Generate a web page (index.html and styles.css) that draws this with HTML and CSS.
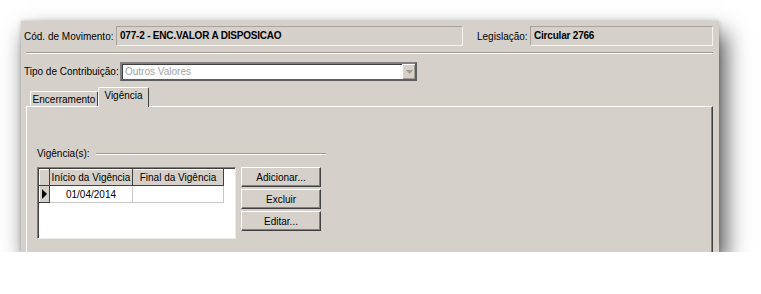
FILE: index.html
```html
<!DOCTYPE html>
<html lang="pt-BR">

<head>
  <meta charset="UTF-8" />
  <title>Movimento - Vigência</title>
  <link rel="stylesheet" href="styles.css">
</head>

<body>
  <div class="form">
    <!-- Cabeçalho do movimento -->
    <div class="row top-row">
      <span class="lbl lbl-mov">Cód. de Movimento:</span>
      <div class="field mov">077-2 - ENC.VALOR A DISPOSICAO</div>
      <span class="lbl leg">Legislação:</span>
      <div class="field lei">Circular 2766</div>
    </div>

    <div class="sep"></div>

    <div class="row contrib-row">
      <span class="lbl lbl-tipo">Tipo de Contribuição:</span>
      <div class="combo">
        <span class="combo-text">Outros Valores</span>
        <span class="drop">
          <svg width="7" height="4" viewBox="0 0 7 4"><path d="M0 0h7L3.5 4z" fill="#a09c94" /></svg>
        </span>
      </div>
    </div>

    <!-- Abas -->
    <div class="tabs">
      <div class="tab">Encerramento</div>
      <div class="tab active">Vigência</div>
    </div>

    <div class="sheet">
      <div class="group-title">
        <span>Vigência(s):</span>
        <i></i>
      </div>

      <div class="grid-area">
        <div class="grid">
          <table>
            <tr>
              <th class="ind"></th>
              <th class="c1">Início da Vigência</th>
              <th class="c2">Final da Vigência</th>
            </tr>
            <tr>
              <td class="ind"><span class="arrow"></span></td>
              <td class="c1">01/04/2014</td>
              <td class="c2"></td>
            </tr>
          </table>
        </div>

        <div class="buttons">
          <button>Adicionar...</button>
          <button>Excluir</button>
          <button>Editar...</button>
        </div>
      </div>
    </div>
  </div>
</body>

</html>
```

FILE: styles.css
```css
/* Página */
body {
  margin: 0;
  background-color: #ffffff;
  font-family: 'Liberation Sans', Arial, sans-serif;
  font-size: 10px;
  color: #000;
}

/* Janela recortada com sombra */
.form {
  margin: 21px 0 0 21px;
  width: 698px;
  height: 231px;
  background-color: #d5d1ca;
  overflow: hidden;
  box-shadow: 6px 12px 22px rgba(0, 0, 0, 0.7), 0 0 4px rgba(0, 0, 0, 0.2);
}

.row {
  display: flex;
  align-items: center;
  padding-left: 3px;
}

.top-row {
  padding-top: 5px;
}

.contrib-row {
  margin-top: 8px;
}

.lbl {
  white-space: nowrap;
}

.lbl-mov {
  width: 92px;
}

.lbl-tipo {
  width: 96px;
}

/* Campos somente leitura */
.field {
  height: 18px;
  line-height: 18px;
  padding-left: 3px;
  font-weight: bold;
  letter-spacing: -0.2px;
  border: 1px solid;
  border-color: #a8a49d #f6f4f0 #f6f4f0 #a8a49d;
}

.mov {
  width: 342px;
}

.leg {
  margin-left: 14px;
  width: 53px;
}

.lei {
  width: 178px;
}

.sep {
  margin: 6px 6px 0 5px;
  height: 0;
  border-top: 1px solid #a09c94;
  border-bottom: 1px solid #ffffff;
}

/* Combo desabilitado */
.combo {
  display: flex;
  width: 293px;
  height: 15px;
  background-color: #fff;
  border: 2px solid;
  border-color: #808080 #5e5e5e #5e5e5e #808080;
  box-shadow: inset 1px 1px 0 #404040;
}

.combo-text {
  flex: 1;
  padding: 1px 0 0 3px;
  line-height: 14px;
  color: #a3a3a3;
}

.drop {
  width: 12px;
  display: flex;
  align-items: center;
  justify-content: center;
  background-color: #d5d1ca;
  border-left: 1px solid #fff;
  border-top: 1px solid #fff;
  box-shadow: inset -1px -1px 0 #a09c94;
}

/* Abas */
.tabs {
  display: flex;
  align-items: flex-end;
  margin: 6px 0 0 9px;
  position: relative;
  z-index: 1;
}

.tab {
  width: 66px;
  height: 14px;
  line-height: 16px;
  text-align: center;
  border: 1px solid;
  border-bottom: none;
  border-color: #ffffff #404040 #ffffff #ffffff;
  border-radius: 2px 2px 0 0;
}

.tab.active {
  width: 49px;
  height: 19px;
  line-height: 15px;
  margin-bottom: -1px;
  background-color: #d5d1ca;
}

.sheet {
  margin-left: 5px;
  width: 675px;
  height: 160px;
  border: 1px solid;
  border-color: #ffffff #404040 #404040 #ffffff;
  box-shadow: inset -1px 0 0 #808080;
  padding: 40px 0 0 10px;
}

.group-title {
  display: flex;
  align-items: center;
  width: 289px;
  line-height: 13px;
}

.group-title i {
  flex: 1;
  margin-left: 6px;
  border-top: 1px solid #a09c94;
  border-bottom: 1px solid #fff;
}

.grid-area {
  display: flex;
  margin-top: 7px;
}

/* Grade */
.grid {
  width: 196px;
  height: 69px;
  background-color: #fff;
  border: 1px solid;
  border-color: #808080 #eeebe6 #eeebe6 #808080;
  box-shadow: inset 1px 1px 0 #404040;
  padding: 1px 0 0 1px;
}

table {
  border-collapse: collapse;
}

th {
  height: 15px;
  padding: 0;
  font-weight: normal;
  white-space: nowrap;
  background-color: #d5d1ca;
  border: 1px solid;
  border-color: #ffffff #404040 #404040 #ffffff;
}

td {
  height: 16px;
  padding: 0;
  text-align: center;
  border-right: 1px solid #c8c8c8;
  border-bottom: 1px solid #c8c8c8;
}

.ind {
  width: 9px;
}

td.ind {
  background-color: #d5d1ca;
  border: 1px solid;
  border-color: #ffffff #404040 #404040 #ffffff;
}

.c1 {
  width: 82px;
}

.c2 {
  width: 90px;
}

.arrow {
  display: block;
  width: 0;
  height: 0;
  margin-left: 2px;
  border-top: 5px solid transparent;
  border-bottom: 5px solid transparent;
  border-left: 5px solid #000;
}

/* Botões */
.buttons {
  display: flex;
  flex-direction: column;
  gap: 2px;
  margin-left: 5px;
}

button {
  width: 80px;
  height: 20px;
  padding: 0;
  font-family: inherit;
  font-size: 10px;
  background-color: #d5d1ca;
  border: 1px solid;
  border-color: #ffffff #404040 #404040 #ffffff;
  box-shadow: inset -1px -1px 0 #808080;
}
```
